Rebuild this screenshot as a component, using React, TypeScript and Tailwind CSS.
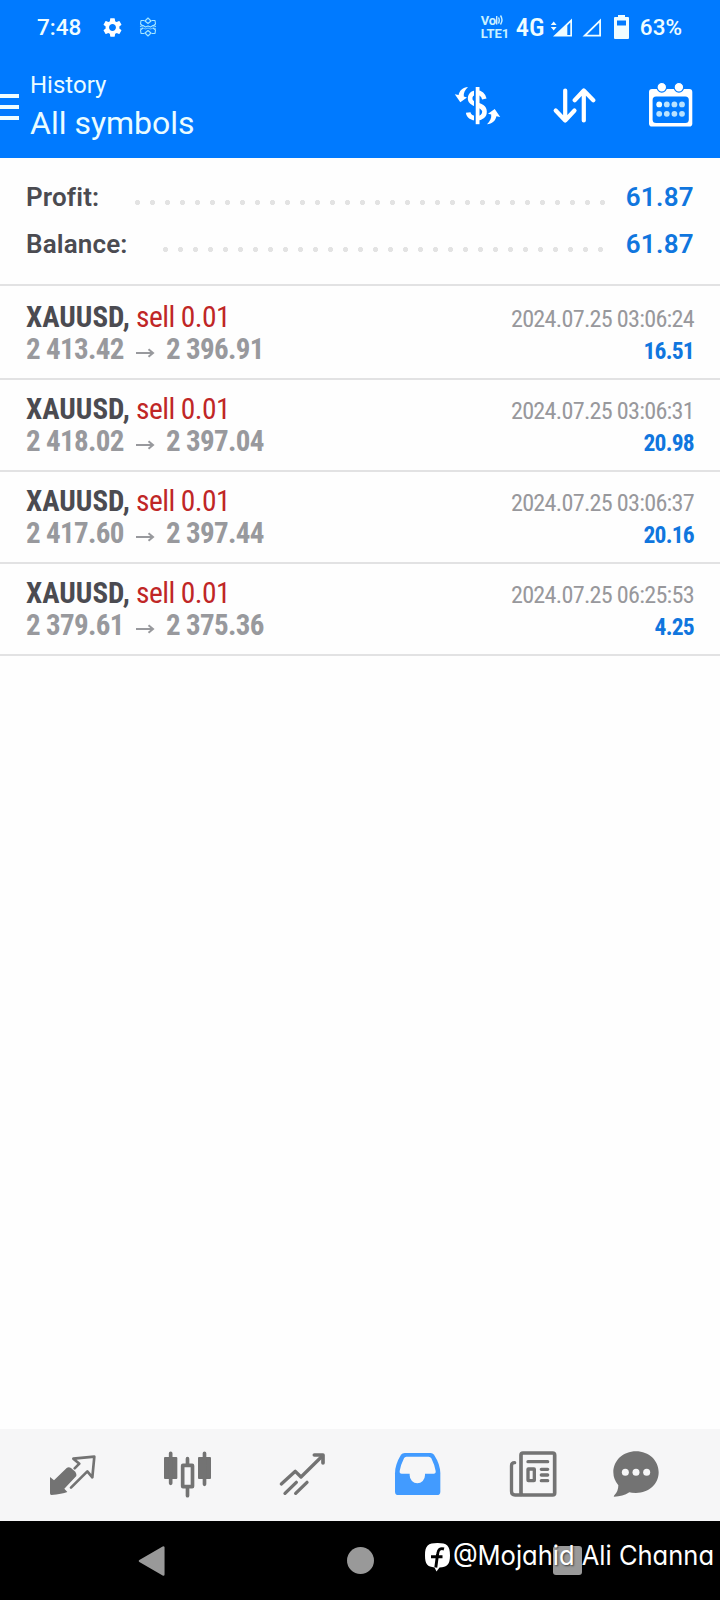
import { MdSettings } from "react-icons/md";

const deals = [
  { open: "2 413.42", close: "2 396.91", time: "2024.07.25 03:06:24", profit: "16.51" },
  { open: "2 418.02", close: "2 397.04", time: "2024.07.25 03:06:31", profit: "20.98" },
  { open: "2 417.60", close: "2 397.44", time: "2024.07.25 03:06:37", profit: "20.16" },
  { open: "2 379.61", close: "2 375.36", time: "2024.07.25 06:25:53", profit: "4.25" },
];

function StatusBar() {
  return (
    <div className="flex h-[54px] items-center pl-[37px] pr-[38px] text-[22.5px] font-medium leading-[54px] text-[#f0fdff]">
      <span className="w-[64px]">7:48</span>
      <MdSettings className="h-[23px] w-[23px] text-white" />
      <svg className="ml-[15px] h-[20px] w-[18px]" viewBox="0 0 18 20" fill="none" stroke="#a5e6ff" strokeWidth="1.1" strokeLinejoin="round">
        <path d="M9 1 L12 4 L9 6.5 L6 4 Z M9 19 L12 16 L9 13.5 L6 16 Z" />
        <path d="M5.5 3.5 H2 L1.5 7 L4 9 M12.500 3.500 H16 L16.500 7 L14 9 M4 11 L1.500 13 L2 16.500 H5.500 M14 11 L16.500 13 L16 16.500 H12.500" />
        <path d="M1 9.500 L4 8.500 L6.500 10 L9 9 L11.500 10 L14 8.500 L17 9.500" />
        <path d="M1 11.500 L4 11 L6.500 12 L9 11 L11.500 12 L14 11 L17 11.500" opacity=".6" />
      </svg>
      <div className="ml-auto flex h-[54px] items-center">
        <div className="flex w-[35px] flex-col font-['Roboto'] font-bold leading-[12px] text-[#c8f1ff]">
          <div className="flex h-[12px] items-center">
            <span className="text-[13px] tracking-[-0.3px]">Vo</span>
            <svg className="h-[13px] w-[8px]" viewBox="0 0 8 13" fill="none" stroke="#c8f1ff" strokeWidth="1.4">
              <path d="M0.700 2 V10.500 M2.500 3.500 Q4 6 2.500 9.500 M4.500 1.500 Q7.500 6 4.500 10.500" />
            </svg>
          </div>
          <span className="text-[13px] leading-[13px]">LTE1</span>
        </div>
        <span className="w-[34px] font-['Roboto_Condensed'] text-[26.500px] font-medium">4G</span>
        <svg className="h-[26px] w-[82px]" viewBox="550 13 82 26">
          <g fill="#f0fdff">
            <path d="M550.800 24 L553.700 20.500 L556.600 24 Z M550.800 26 L553.700 29.500 L556.600 26 Z" />
            <path d="M553 35.500 L572 17.500 V35.500 Z M567.300 24.500 V34 H570.300 V21.500 Z" fillRule="evenodd" />
            <path d="M582.500 35.500 L601 17.500 V35.500 Z M587 33.700 H599.200 V21.800 Z" fillRule="evenodd" />
            <path d="M618 14 H625 V16 H628 Q629 16 629 17 V37 Q629 38 628 38 H615 Q614 38 614 37 V17 Q614 16 615 16 H618 Z M617 19.500 V24.500 H626 V19.500 Z" fillRule="evenodd" />
          </g>
        </svg>
        <span className="ml-[8px]">63%</span>
      </div>
    </div>
  );
}

function Header() {
  return (
    <header className="h-[158px] bg-[#007aff]">
      <StatusBar />
      <div className="flex h-[104px] items-start pr-[27px]">
        <div className="mt-[39.500px] flex w-[19px] flex-col gap-[7px]">
          <div className="h-[4px] bg-[#f0fdff]" />
          <div className="h-[4px] bg-[#f0fdff]" />
          <div className="h-[4px] bg-[#f0fdff]" />
        </div>
        <div className="ml-[11px] mt-[17px] text-[#eafcff]">
          <div className="text-[24px] leading-[29px]">History</div>
          <div className="text-[32px] leading-[46px]">All symbols</div>
        </div>
        <div className="ml-auto mt-[28px] flex">
          <svg className="h-[46px] w-[48px]" viewBox="454 82 48 46">
            <path d="M484.300 99 C483.500 95 480.500 92.600 477 92.600 C472 92.600 469.700 95.500 470.200 99.500 C471 106 484.300 103.500 484.500 111.500 C484.600 116 481 118.300 477 118.300 C472 118.300 468.500 116 468.200 112.500" fill="none" stroke="#fff" strokeWidth="4.600" />
            <path d="M475 86 V125" stroke="#007aff" strokeWidth="2" />
            <path d="M477.600 87 V124.200" stroke="#fff" strokeWidth="3.800" />
            <g fill="#fff">
              <path d="M468 87 C463 87.300 459.300 90.500 458.600 95 L454.800 94.300 L460.300 102.300 L467 97.500 L463.800 96.600 C463.300 93 465 89.800 468 87 Z" />
              <path transform="rotate(180 477.500 105.600)" d="M468 87 C463 87.300 459.300 90.500 458.600 95 L454.800 94.300 L460.300 102.300 L467 97.500 L463.800 96.600 C463.300 93 465 89.800 468 87 Z" />
            </g>
          </svg>
          <svg className="ml-[50px] h-[46px] w-[44px]" viewBox="552 82 44 46" fill="none" stroke="#fff" strokeWidth="4.200" strokeLinecap="round" strokeLinejoin="round">
            <path d="M565.200 90.500 V120.500 M555.700 110.500 L565.200 120.500 L574.500 110.500" />
            <path d="M583.800 120.500 V90.500 M574.700 100.200 L583.800 90.500 L593.300 100.200" />
          </svg>
          <svg className="ml-[51px] h-[46px] w-[46px]" viewBox="647 82 46 46">
            <path d="M652 89 H689.300 Q692.300 89 692.300 92 V123.500 Q692.300 126.600 689.300 126.600 H652 Q649 126.600 649 123.500 V92 Q649 89 652 89 Z" fill="#fff" />
            <rect x="652.600" y="96.400" width="36.200" height="26.600" rx="3.500" fill="#007aff" />
            <g fill="#fff" stroke="#007aff" strokeWidth="1.200">
              <circle cx="661.800" cy="87.300" r="4.800" />
              <circle cx="678.900" cy="87.300" r="4.800" />
            </g>
            <g fill="#b8e2ff">
              <circle cx="659.200" cy="104.400" r="2.900" fill="#f0fdff" />
              <circle cx="666.800" cy="104.400" r="2.900" />
              <circle cx="674.400" cy="104.400" r="2.900" />
              <circle cx="682" cy="104.400" r="2.900" />
              <circle cx="659.200" cy="113.800" r="2.900" />
              <circle cx="666.800" cy="113.800" r="2.900" />
              <circle cx="674.400" cy="113.800" r="2.900" />
              <circle cx="682" cy="113.800" r="2.900" />
            </g>
          </svg>
        </div>
      </div>
    </header>
  );
}

function Summary() {
  const dots = "mt-[10px] h-[15px] bg-[radial-gradient(circle,#e3e3e3_2.3px,transparent_2.9px)] bg-[length:15px_15px]";
  return (
    <section className="border-b-2 border-[#e2e2e3] pb-[16px] pl-[26px] pr-[26px] pt-[16px] text-[26px] font-semibold leading-[47px] text-[#4b4b51]">
      <div className="flex h-[47px] items-center">
        <span className="w-[104px] tracking-[0.15px]">Profit:</span>
        <div className={dots + " w-[480px]"} />
        <span className="ml-auto tracking-[0.3px] text-[#1076de]">61.87</span>
      </div>
      <div className="flex h-[47px] items-center">
        <span className="w-[132px] tracking-[0.15px]">Balance:</span>
        <div className={dots + " w-[450px]"} />
        <span className="ml-auto tracking-[0.3px] text-[#1076de]">61.87</span>
      </div>
    </section>
  );
}

function DealList() {
  return (
    <section className="pt-[2px] font-['Roboto_Condensed','Roboto',sans-serif]">
      {deals.map((d) => (
        <div key={d.time} className="border-b-2 border-[#e2e2e3] px-[26px] py-[13px] leading-[32px]">
          <div className="flex h-[32px] items-baseline">
            <span className="w-[110px] whitespace-nowrap text-[29px] font-bold text-[#4b4b51]">XAUUSD,</span>
            <span className="text-[29.500px] leading-[32px] tracking-[-0.550px] text-[#c02626]">sell 0.01</span>
            <span className="ml-auto text-[24.200px] tracking-[-0.720px] text-[#98989c]">{d.time}</span>
          </div>
          <div className="flex h-[32px] items-baseline text-[29px] font-bold text-[#98999d]">
            <span className="w-[109px] tracking-[-0.650px]">{d.open}</span>
            <svg className="h-[11px] w-[20px]" viewBox="0 0 20 11" fill="none" stroke="#98999d" strokeWidth="2">
              <path d="M1 5 H18" />
              <path d="M13.500 1.300 L18 5 L13.500 8.700" />
            </svg>
            <span className="ml-[11px] tracking-[-0.650px]">{d.close}</span>
            <span className="ml-auto text-[23.500px] tracking-[-0.750px] text-[#1076de]">{d.profit}</span>
          </div>
        </div>
      ))}
    </section>
  );
}

function TabBar() {
  const icon = "h-[92px] w-[60px]";
  return (
    <nav className="flex h-[92px] gap-[55px] bg-[#f6f6f7] pl-[43px]">
      <svg className={icon} viewBox="129 27 180 276">
        <path d="M150 171 L162 181 L200 144 Q206 139 213 144 L226 155 Q231 163 229 168 L193 206 L202 216 Q186 222 154 225 Q150 225 150 220 Z" fill="#737373" />
        <path d="M213 203 L262 154 L277 172 L283 110 L220 116 L238 131 L224 145" fill="none" stroke="#737373" strokeWidth="8" strokeLinejoin="round" strokeLinecap="round" />
      </svg>
      <svg className={icon} viewBox="474 27 180 276">
        <g fill="#737373">
          <rect x="492" y="111" width="40" height="66" rx="3" />
          <rect x="594" y="111" width="39" height="66" rx="3" />
        </g>
        <g fill="none" stroke="#737373" strokeWidth="11" strokeLinecap="round">
          <path d="M512 100 V190 M613.500 100 V193 M562.500 116 V132 M562.500 205 V227" />
          <rect x="548" y="136" width="29.500" height="64" rx="1" />
        </g>
      </svg>
      <svg className={icon} viewBox="99 27 180 276" fill="none" stroke="#737373" strokeWidth="10" strokeLinecap="round" strokeLinejoin="round">
        <path d="M124 192 L166 154 L183 171 L247 108 M135 220 L169 187 M167 220 L201 187" />
        <path d="M223 105 H249 V129" strokeWidth="11" />
      </svg>
      <svg className={icon} viewBox="444 27 180 276">
        <path d="M494 99 H572 Q578 99 582 104 Q601 133 601 160 V215 Q601 225 591 225 H475 Q465 225 465 215 V160 Q465 133 483 104 Q487 99 494 99 Z" fill="#429bff" />
        <path d="M499 110 H566 Q571 110 574 115 Q584 135 587 153 Q588 161 581 161 H555 V166 A23 24 0 0 1 509 166 V161 H485 Q478 161 479 153 Q482 135 492 115 Q494 110 499 110 Z" fill="#f6f6f7" />
      </svg>
      <svg className={icon} viewBox="309 27 180 276" fill="none" stroke="#737373" strokeWidth="10" strokeLinecap="round" strokeLinejoin="round">
        <rect x="363" y="99" width="101" height="126" rx="6" strokeWidth="11" />
        <path d="M344 128 Q334.500 128 334.500 137 V214 Q334.500 225 345 225 H363" />
        <path d="M384 125 H443 M424 148 H443 M424 165 H443 M424 182 H443" />
        <rect x="384" y="147" width="19" height="35" rx="1" />
      </svg>
      <svg className={"-ml-[12px] " + icon} viewBox="618 27 180 276">
        <path d="M708 94 C747 94 776 122 776 157 C776 192 747 219 708 219 Q694 219 688 217 Q668 230 643 230 Q639 230 643 226 Q655 214 655 196 Q640 178 640 157 C640 122 669 94 708 94 Z" fill="#737373" />
        <g fill="#f6f6f7">
          <circle cx="676" cy="157" r="10.500" />
          <circle cx="708" cy="157" r="10.500" />
          <circle cx="740" cy="157" r="10.500" />
        </g>
      </svg>
    </nav>
  );
}

function SystemNav() {
  return (
    <div className="relative flex h-[79px] items-center bg-black pl-[138px]">
      <svg className="h-[32px] w-[27px]" viewBox="0 0 27 32">
        <path d="M2 16 L25.300 2.500 V29.500 Z" fill="#999" stroke="#999" strokeWidth="2.500" strokeLinejoin="round" />
      </svg>
      <div className="ml-[182px] h-[27px] w-[27px] rounded-full bg-[#999]" />
      <div className="ml-[179px] h-[29px] w-[29px] rounded-[3px] bg-[#999]" />
      <div className="absolute left-[425px] top-[22px] flex h-[40px] items-start">
        <svg className="h-[29px] w-[26px]" viewBox="0 0 26 29">
          <path d="M12.500 0 C22 0 25 2.500 25 12.500 C25 21.500 22 24.300 14.500 24.400 L11.500 28.500 L9.500 24.400 C2.500 24 0 21 0 12.500 C0 2.500 3 0 12.500 0 Z" fill="#fff" />
          <path d="M19 6 Q13.300 4.300 12.600 11 L10.800 24.500 M6 13.700 H17.500" fill="none" stroke="#000" strokeWidth="2.900" />
        </svg>
        <span className="origin-left scale-x-[0.945] whitespace-nowrap pl-[2px] font-['Inter'] text-[27px] font-normal leading-[25px] text-white [font-feature-settings:'cv11'] [text-shadow:1px_1px_2px_rgba(0,0,0,0.600)]">
          @Mojahid Ali Channa
        </span>
      </div>
    </div>
  );
}

export default function App() {
  return (
    <div className="flex h-[1600px] w-[720px] flex-col overflow-hidden bg-[#fefefe] font-['Roboto',sans-serif]">
      <Header />
      <Summary />
      <DealList />
      <div className="flex-1" />
      <TabBar />
      <SystemNav />
    </div>
  );
}
